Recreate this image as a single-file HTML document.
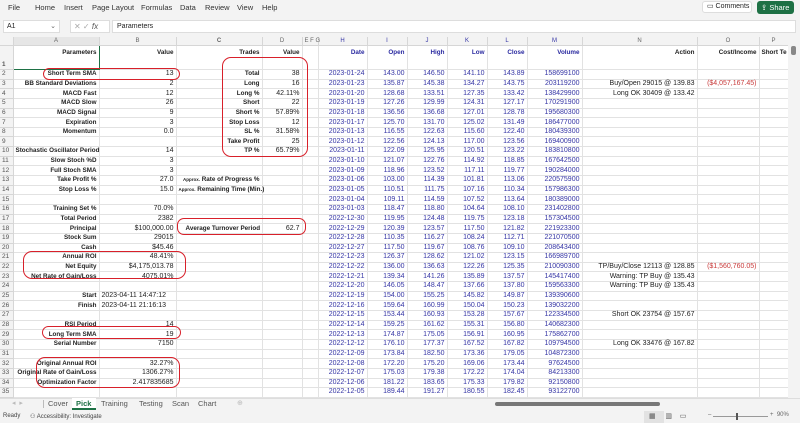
<!DOCTYPE html>
<html><head><meta charset="utf-8"><style>
*{margin:0;padding:0;box-sizing:border-box}
body{width:800px;height:423px;overflow:hidden;background:#f3f3f3;font-family:"Liberation Sans",sans-serif;font-size:7px;color:#222;position:relative}
.abs{position:absolute;white-space:nowrap}
.menu span{position:absolute;top:3px;font-size:7.5px;color:#333}
#wrap{position:absolute;left:0;top:37px;width:788px;height:361px;overflow:hidden;background:#fff}
#grid{width:788px;border-collapse:collapse;table-layout:fixed;background:#fff}
#grid tr{height:9.65px}
#grid td{border-right:1px solid #e2e2e2;border-bottom:1px solid #e2e2e2;height:9.65px;padding:0 2px;white-space:nowrap;overflow:visible;text-align:right;line-height:8px;font-size:7px}
#grid tr.h{height:8px}
#grid tr.h td{height:8px;background:#f3f3f3;color:#666;text-align:center;font-size:6px;border-color:#d6d6d6}
#grid tr.r1{height:24px}
#grid tr.r1 td{height:24px;vertical-align:top;padding-top:3px;font-weight:bold;font-size:6.3px}
#grid td:first-child{background:#f3f3f3;color:#555;text-align:left;font-size:6.5px;padding-left:2px;border-color:#d6d6d6}
#grid td:nth-child(2){font-weight:bold;font-size:6.3px}
#grid td:nth-child(4){font-weight:bold;font-size:6.3px}
#grid td:nth-child(n+7):nth-child(-n+12){color:#3535a5}
#grid td:nth-child(14){color:#c83a3a}
#grid tr.r1 td:nth-child(n+7){color:#2a2aa0}
#grid tr.r1 td:nth-child(n+13){color:#222}
.ov{position:absolute;border:1.6px solid #d8202a;border-radius:7px}
.sm{font-size:4.5px}
</style></head><body>
<div class="menu">
<span style="left:8px">File</span><span style="left:35px">Home</span><span style="left:64px">Insert</span><span style="left:92px">Page Layout</span><span style="left:141px">Formulas</span><span style="left:180px">Data</span><span style="left:205px">Review</span><span style="left:237px">View</span><span style="left:262px">Help</span>
</div>
<div class="abs" style="left:702px;top:1px;width:50px;height:12px;background:#fff;border:1px solid #ddd;border-radius:3px;font-size:7px;line-height:10px;padding-left:4px">▭ Comments</div>
<div class="abs" style="left:757px;top:1px;width:37px;height:13px;background:#1e7145;border-radius:3px;color:#fff;font-size:7.5px;line-height:13px;padding-left:4px">⇪ Share</div>
<div class="abs" style="left:3px;top:20px;width:57px;height:13px;background:#fff;border:1px solid #ddd;font-size:7px;line-height:11px;padding-left:3px">A1<span style="position:absolute;right:3px;color:#666">⌄</span></div>
<div class="abs" style="left:70px;top:20px;width:40px;height:13px;background:#fff;border:1px solid #ddd;color:#aaa;font-size:8px;line-height:11px;padding-left:3px">✕ ✓ <i style="color:#555">fx</i></div>
<div class="abs" style="left:112px;top:20px;width:684px;height:13px;background:#fff;border:1px solid #ddd;font-size:7px;line-height:11px;padding-left:4px">Parameters</div>
<div id="wrap">
<table id="grid">
<colgroup><col style="width:13px"><col style="width:86px"><col style="width:77px"><col style="width:86px"><col style="width:40px"><col style="width:16px"><col style="width:49px"><col style="width:40px"><col style="width:40px"><col style="width:40px"><col style="width:40px"><col style="width:55px"><col style="width:115px"><col style="width:62px"><col style="width:29px"></colgroup>
<tr class="h"><td></td><td style="background:#e6e6e6;font-weight:normal;font-size:6px">A</td><td>B</td><td>C</td><td>D</td><td>E F G</td><td>H</td><td>I</td><td>J</td><td>K</td><td>L</td><td>M</td><td>N</td><td>O</td><td>P</td></tr>
<tr class="r1"><td style="vertical-align:bottom">1</td><td style="border:1px solid #1e7145">Parameters</td><td>Value</td><td>Trades</td><td>Value</td><td></td><td>Date</td><td>Open</td><td>High</td><td>Low</td><td>Close</td><td>Volume</td><td>Action</td><td>Cost/Income</td><td style="text-align:left">Short Te</td></tr>
<tr><td>2</td><td>Short Term SMA</td><td>13</td><td>Total</td><td>38</td><td></td><td>2023-01-24</td><td>143.00</td><td>146.50</td><td>141.10</td><td>143.89</td><td>158699100</td><td></td><td></td><td></td></tr>
<tr><td>3</td><td>BB Standard Deviations</td><td>2</td><td>Long</td><td>16</td><td></td><td>2023-01-23</td><td>135.87</td><td>145.38</td><td>134.27</td><td>143.75</td><td>203119200</td><td>Buy/Open 29015 @ 139.83</td><td>($4,057,167.45)</td><td></td></tr>
<tr><td>4</td><td>MACD Fast</td><td>12</td><td>Long %</td><td>42.11%</td><td></td><td>2023-01-20</td><td>128.68</td><td>133.51</td><td>127.35</td><td>133.42</td><td>138429900</td><td>Long OK 30409 @ 133.42</td><td></td><td></td></tr>
<tr><td>5</td><td>MACD Slow</td><td>26</td><td>Short</td><td>22</td><td></td><td>2023-01-19</td><td>127.26</td><td>129.99</td><td>124.31</td><td>127.17</td><td>170291900</td><td></td><td></td><td></td></tr>
<tr><td>6</td><td>MACD Signal</td><td>9</td><td>Short %</td><td>57.89%</td><td></td><td>2023-01-18</td><td>136.56</td><td>136.68</td><td>127.01</td><td>128.78</td><td>195680300</td><td></td><td></td><td></td></tr>
<tr><td>7</td><td>Expiration</td><td>3</td><td>Stop Loss</td><td>12</td><td></td><td>2023-01-17</td><td>125.70</td><td>131.70</td><td>125.02</td><td>131.49</td><td>186477000</td><td></td><td></td><td></td></tr>
<tr><td>8</td><td>Momentum</td><td>0.0</td><td>SL %</td><td>31.58%</td><td></td><td>2023-01-13</td><td>116.55</td><td>122.63</td><td>115.60</td><td>122.40</td><td>180439300</td><td></td><td></td><td></td></tr>
<tr><td>9</td><td></td><td></td><td>Take Profit</td><td>25</td><td></td><td>2023-01-12</td><td>122.56</td><td>124.13</td><td>117.00</td><td>123.56</td><td>169400900</td><td></td><td></td><td></td></tr>
<tr><td>10</td><td>Stochastic Oscillator Period</td><td>14</td><td>TP %</td><td>65.79%</td><td></td><td>2023-01-11</td><td>122.09</td><td>125.95</td><td>120.51</td><td>123.22</td><td>183810800</td><td></td><td></td><td></td></tr>
<tr><td>11</td><td>Slow Stoch %D</td><td>3</td><td></td><td></td><td></td><td>2023-01-10</td><td>121.07</td><td>122.76</td><td>114.92</td><td>118.85</td><td>167642500</td><td></td><td></td><td></td></tr>
<tr><td>12</td><td>Full Stoch SMA</td><td>3</td><td></td><td></td><td></td><td>2023-01-09</td><td>118.96</td><td>123.52</td><td>117.11</td><td>119.77</td><td>190284000</td><td></td><td></td><td></td></tr>
<tr><td>13</td><td>Take Profit %</td><td>27.0</td><td><span class="sm">Approx.</span> Rate of Progress %</td><td></td><td></td><td>2023-01-06</td><td>103.00</td><td>114.39</td><td>101.81</td><td>113.06</td><td>220575900</td><td></td><td></td><td></td></tr>
<tr><td>14</td><td>Stop Loss %</td><td>15.0</td><td><span class="sm">Approx.</span> Remaining Time (Min.)</td><td></td><td></td><td>2023-01-05</td><td>110.51</td><td>111.75</td><td>107.16</td><td>110.34</td><td>157986300</td><td></td><td></td><td></td></tr>
<tr><td>15</td><td></td><td></td><td></td><td></td><td></td><td>2023-01-04</td><td>109.11</td><td>114.59</td><td>107.52</td><td>113.64</td><td>180389000</td><td></td><td></td><td></td></tr>
<tr><td>16</td><td>Training Set %</td><td>70.0%</td><td></td><td></td><td></td><td>2023-01-03</td><td>118.47</td><td>118.80</td><td>104.64</td><td>108.10</td><td>231402800</td><td></td><td></td><td></td></tr>
<tr><td>17</td><td>Total Period</td><td>2382</td><td></td><td></td><td></td><td>2022-12-30</td><td>119.95</td><td>124.48</td><td>119.75</td><td>123.18</td><td>157304500</td><td></td><td></td><td></td></tr>
<tr><td>18</td><td>Principal</td><td>$100,000.00</td><td style="text-align:left;padding-left:9px">Average Turnover Period</td><td>62.7</td><td></td><td>2022-12-29</td><td>120.39</td><td>123.57</td><td>117.50</td><td>121.82</td><td>221923300</td><td></td><td></td><td></td></tr>
<tr><td>19</td><td>Stock Sum</td><td>29015</td><td></td><td></td><td></td><td>2022-12-28</td><td>110.35</td><td>116.27</td><td>108.24</td><td>112.71</td><td>221070500</td><td></td><td></td><td></td></tr>
<tr><td>20</td><td>Cash</td><td>$45.46</td><td></td><td></td><td></td><td>2022-12-27</td><td>117.50</td><td>119.67</td><td>108.76</td><td>109.10</td><td>208643400</td><td></td><td></td><td></td></tr>
<tr><td>21</td><td>Annual ROI</td><td>48.41%</td><td></td><td></td><td></td><td>2022-12-23</td><td>126.37</td><td>128.62</td><td>121.02</td><td>123.15</td><td>166989700</td><td></td><td></td><td></td></tr>
<tr><td>22</td><td>Net Equity</td><td>$4,175,013.78</td><td></td><td></td><td></td><td>2022-12-22</td><td>136.00</td><td>136.63</td><td>122.26</td><td>125.35</td><td>210090300</td><td>TP/Buy/Close 12113 @ 128.85</td><td>($1,560,760.05)</td><td></td></tr>
<tr><td>23</td><td>Net Rate of Gain/Loss</td><td>4075.01%</td><td></td><td></td><td></td><td>2022-12-21</td><td>139.34</td><td>141.26</td><td>135.89</td><td>137.57</td><td>145417400</td><td>Warning: TP Buy @ 135.43</td><td></td><td></td></tr>
<tr><td>24</td><td></td><td></td><td></td><td></td><td></td><td>2022-12-20</td><td>146.05</td><td>148.47</td><td>137.66</td><td>137.80</td><td>159563300</td><td>Warning: TP Buy @ 135.43</td><td></td><td></td></tr>
<tr><td>25</td><td>Start</td><td style="text-align:left">2023-04-11 14:47:12</td><td></td><td></td><td></td><td>2022-12-19</td><td>154.00</td><td>155.25</td><td>145.82</td><td>149.87</td><td>139390600</td><td></td><td></td><td></td></tr>
<tr><td>26</td><td>Finish</td><td style="text-align:left">2023-04-11 21:16:13</td><td></td><td></td><td></td><td>2022-12-16</td><td>159.64</td><td>160.99</td><td>150.04</td><td>150.23</td><td>139032200</td><td></td><td></td><td></td></tr>
<tr><td>27</td><td></td><td></td><td></td><td></td><td></td><td>2022-12-15</td><td>153.44</td><td>160.93</td><td>153.28</td><td>157.67</td><td>122334500</td><td>Short OK 23754 @ 157.67</td><td></td><td></td></tr>
<tr><td>28</td><td>RSI Period</td><td>14</td><td></td><td></td><td></td><td>2022-12-14</td><td>159.25</td><td>161.62</td><td>155.31</td><td>156.80</td><td>140682300</td><td></td><td></td><td></td></tr>
<tr><td>29</td><td>Long Term SMA</td><td>19</td><td></td><td></td><td></td><td>2022-12-13</td><td>174.87</td><td>175.05</td><td>156.91</td><td>160.95</td><td>175862700</td><td></td><td></td><td></td></tr>
<tr><td>30</td><td>Serial Number</td><td>7150</td><td></td><td></td><td></td><td>2022-12-12</td><td>176.10</td><td>177.37</td><td>167.52</td><td>167.82</td><td>109794500</td><td>Long OK 33476 @ 167.82</td><td></td><td></td></tr>
<tr><td>31</td><td></td><td></td><td></td><td></td><td></td><td>2022-12-09</td><td>173.84</td><td>182.50</td><td>173.36</td><td>179.05</td><td>104872300</td><td></td><td></td><td></td></tr>
<tr><td>32</td><td>Original Annual ROI</td><td>32.27%</td><td></td><td></td><td></td><td>2022-12-08</td><td>172.20</td><td>175.20</td><td>169.06</td><td>173.44</td><td>97624500</td><td></td><td></td><td></td></tr>
<tr><td>33</td><td>Original Rate of Gain/Loss</td><td>1306.27%</td><td></td><td></td><td></td><td>2022-12-07</td><td>175.03</td><td>179.38</td><td>172.22</td><td>174.04</td><td>84213300</td><td></td><td></td><td></td></tr>
<tr><td>34</td><td>Optimization Factor</td><td>2.417835685</td><td></td><td></td><td></td><td>2022-12-06</td><td>181.22</td><td>183.65</td><td>175.33</td><td>179.82</td><td>92150800</td><td></td><td></td><td></td></tr>
<tr><td>35</td><td></td><td></td><td></td><td></td><td></td><td>2022-12-05</td><td>189.44</td><td>191.27</td><td>180.55</td><td>182.45</td><td>93122700</td><td></td><td></td><td></td></tr>
<tr><td>36</td><td></td><td></td><td></td><td></td><td></td><td>2022-12-02</td><td>191.78</td><td>196.25</td><td>191.11</td><td>194.86</td><td>73645900</td><td></td><td></td><td></td></tr>
<tr><td>37</td><td></td><td></td><td></td><td></td><td></td><td>2022-12-01</td><td>197.08</td><td>198.92</td><td>191.80</td><td>194.70</td><td>80046200</td><td></td><td></td><td></td></tr>
</table>
</div>
<div class="ov" style="left:43px;top:68px;width:137px;height:12px"></div>
<div class="ov" style="left:222px;top:57px;width:86px;height:100px;border-radius:9px"></div>
<div class="ov" style="left:177px;top:218px;width:129px;height:17px"></div>
<div class="ov" style="left:23px;top:251px;width:163px;height:28px;border-radius:9px"></div>
<div class="ov" style="left:42px;top:326px;width:139px;height:13px"></div>
<div class="ov" style="left:36px;top:357px;width:144px;height:31px;border-radius:9px"></div>
<div class="abs" style="left:788px;top:37px;width:12px;height:361px;background:#f3f3f3"></div>
<div class="abs" style="left:791px;top:46px;width:5px;height:9px;background:#888;border-radius:2px"></div>
<div class="abs" style="left:0;top:398px;width:800px;height:12px;background:#f3f3f3;border-top:1px solid #ddd"></div>
<div class="abs" style="left:12px;top:399px;font-size:7px;color:#bbb">◂ &nbsp;▸</div>
<div class="abs" style="left:43px;top:400px;width:1px;height:8px;background:#bbb"></div>
<div class="abs" style="left:48px;top:399px;font-size:7.5px;color:#555">Cover</div>
<div class="abs" style="left:72px;top:398px;width:24px;height:12px;background:#fff;border-bottom:2px solid #1e7145"></div>
<div class="abs" style="left:76px;top:399px;font-size:7.5px;color:#1e7145;font-weight:bold">Pick</div>
<div class="abs" style="left:101px;top:399px;font-size:7.5px;color:#555">Training</div>
<div class="abs" style="left:139px;top:399px;font-size:7.5px;color:#555">Testing</div>
<div class="abs" style="left:172px;top:399px;font-size:7.5px;color:#555">Scan</div>
<div class="abs" style="left:198px;top:399px;font-size:7.5px;color:#555">Chart</div>
<div class="abs" style="left:237px;top:399px;font-size:7px;color:#bbb">⊕</div>
<div class="abs" style="left:495px;top:402px;width:165px;height:4px;background:#777;border-radius:2px"></div>
<div class="abs" style="left:0;top:410px;width:800px;height:13px;background:#f3f3f3"></div>
<div class="abs" style="left:3px;top:413px;font-size:6px;color:#444">Ready</div>
<div class="abs" style="left:30px;top:413px;font-size:6px;color:#444">⚇ Accessibility: Investigate</div>
<div class="abs" style="left:644px;top:411px;width:20px;height:12px;background:#e2e2e2"></div>
<div class="abs" style="left:649px;top:412px;font-size:7px;color:#555">▦ &nbsp;&nbsp;&nbsp;&nbsp;▥ &nbsp;&nbsp;&nbsp;▭</div>
<div class="abs" style="left:713px;top:416px;width:55px;height:1px;background:#999"></div>
<div class="abs" style="left:736px;top:413px;width:2px;height:7px;background:#555"></div>
<div class="abs" style="left:708px;top:412px;font-size:6px;color:#666">–</div>
<div class="abs" style="left:770px;top:412px;font-size:6px;color:#666">+ &nbsp;90%</div>
</body></html>
